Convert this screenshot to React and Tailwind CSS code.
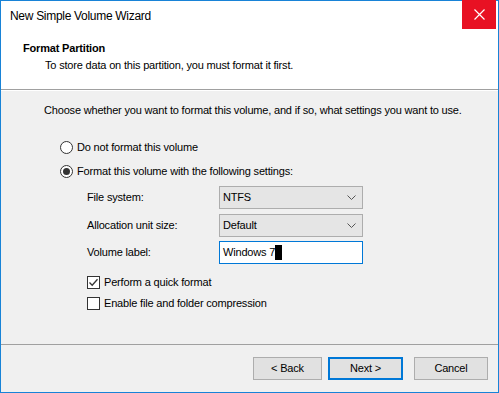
import React from "react";

const FONT = { fontFamily: '"Liberation Sans", Arial, sans-serif' };

function Radio({ checked, label }) {
  return (
    <div className="flex items-center h-[20px]">
      <span className="w-[13px] h-[13px] rounded-full border border-[#333333] bg-white flex items-center justify-center">
        {checked && <span className="w-[7px] h-[7px] rounded-full bg-[#333333]" />}
      </span>
      <span className="ml-[4px]">{label}</span>
    </div>
  );
}

function Check({ checked, label }) {
  return (
    <div className="flex items-center h-[18px]">
      <span className="w-[13px] h-[13px] border border-[#333333] bg-white flex items-center justify-center">
        {checked && (
          <svg width="11" height="11" viewBox="0 0 11 11">
            <path d="M1.5 5.5 L4.2 8.3 L9.5 2.2" fill="none" stroke="#333333" strokeWidth="1.3" />
          </svg>
        )}
      </span>
      <span className="ml-[4px]">{label}</span>
    </div>
  );
}

function Select({ value }) {
  return (
    <div className="w-[144px] h-[23px] border border-[#adadad] bg-[#e5e5e5] flex items-center justify-between pl-[3px] pr-[6px]">
      <span>{value}</span>
      <svg width="9" height="6" viewBox="0 0 9 6">
        <path d="M0.5 0.5 L4.5 4.5 L8.5 0.5" fill="none" stroke="#555555" strokeWidth="1" />
      </svg>
    </div>
  );
}

function Button({ children, primary, w }) {
  return (
    <div
      className={`${w} h-[23px] flex items-center justify-center bg-[#e1e1e1] ${
        primary ? "border-2 border-[#0078d7]" : "border border-[#adadad]"
      }`}
    >
      {children}
    </div>
  );
}

export default function App() {
  return (
    <div
      className="w-[499px] h-[393px] border border-[#1883d7] bg-[#f0f0f0] flex flex-col text-[11px] tracking-[-0.18px] text-black leading-none whitespace-nowrap"
      style={FONT}
    >
      {/* title bar */}
      <div className="h-[30px] bg-white flex items-start justify-between">
        <span className="pl-[9px] pt-[9px] text-[12px] tracking-[-0.3px]">New Simple Volume Wizard</span>
        <div className="w-[34px] h-[29px] mr-[2px] -mt-[1px] bg-[#e81123] flex items-center justify-center">
          <svg width="11" height="11" viewBox="0 0 11 11">
            <path d="M0.5 0.5 L10.5 10.5 M10.5 0.5 L0.5 10.5" stroke="white" strokeWidth="1.2" />
          </svg>
        </div>
      </div>

      {/* header */}
      <div className="h-[59px] bg-white pl-[22px] pt-[10px] border-b border-[#a0a0a0]">
        <div className="font-bold h-[14px] flex items-center">Format Partition</div>
        <div className="pl-[22px] mt-[2px] h-[16px] flex items-center">
          To store data on this partition, you must format it first.
        </div>
      </div>
      <div className="h-px bg-white" />

      {/* body */}
      <div className="flex-1 flex flex-col pl-[43px] pt-[11px]">
        <div className="h-[16px] flex items-center">
          Choose whether you want to format this volume, and if so, what settings you want to use.
        </div>
        <div className="pl-[16px] mt-[19px]">
          <Radio label="Do not format this volume" />
          <div className="mt-[4px]">
            <Radio checked label="Format this volume with the following settings:" />
          </div>
        </div>
        <div className="pl-[43px] mt-[5px] flex flex-col">
          <div className="flex items-center h-[23px]">
            <span className="w-[132px]">File system:</span>
            <Select value="NTFS" />
          </div>
          <div className="flex items-center h-[23px] mt-[5px]">
            <span className="w-[132px]">Allocation unit size:</span>
            <Select value="Default" />
          </div>
          <div className="flex items-center h-[23px] mt-[4px]">
            <span className="w-[132px]">Volume label:</span>
            <div className="w-[144px] h-[23px] border border-[#0078d7] bg-white flex items-center pl-[3px]">
              <span>Windows 7</span>
              <span className="inline-block w-[7px] h-[15px] bg-black" />
            </div>
          </div>
          <div className="mt-[9px]">
            <Check checked label="Perform a quick format" />
          </div>
          <div className="mt-[3px]">
            <Check label="Enable file and folder compression" />
          </div>
        </div>
      </div>

      {/* footer */}
      <div className="h-[48px] border-t border-[#a0a0a0] flex justify-end pt-[12px] pr-[10px]">
        <Button w="w-[69px]">&lt; Back</Button>
        <div className="ml-[6px]">
          <Button primary w="w-[75px]">Next &gt;</Button>
        </div>
        <div className="ml-[11px]">
          <Button w="w-[74px]">Cancel</Button>
        </div>
      </div>
    </div>
  );
}
